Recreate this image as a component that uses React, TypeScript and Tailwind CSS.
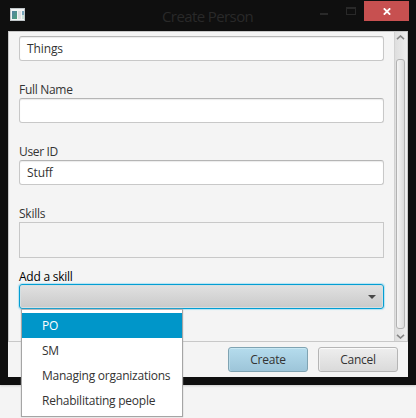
import React from "react";

const FONT = "font-['Open_Sans','Noto_Sans',sans-serif]";

function Label({ text, className = "" }: { text: string; className?: string }) {
  return <span className={`block h-[17px] shrink-0 whitespace-nowrap leading-[17px] ${className}`}>{text}</span>;
}

function Field({ value }: { value?: string }) {
  return (
    <div className="flex h-[25px] shrink-0 items-center rounded-[3px] border border-[#c8c8c8] border-t-[#b5b5b5] bg-white px-[7px] shadow-[inset_0_1px_1px_#ececec]">
      {value && <Label text={value} className="tracking-[-0.1px]" />}
    </div>
  );
}

function TitleBar() {
  return (
    <div className="flex h-[31px] shrink-0 text-[#292929]">
      <svg className="ml-[10px] mt-2 h-[13px] w-[15px] shrink-0" viewBox="0 0 15 13">
        <defs>
          <linearGradient id="pic" x1="0" y1="0" x2="1" y2="1">
            <stop offset="0" stopColor="#5682a5" />
            <stop offset="1" stopColor="#4ea078" />
          </linearGradient>
        </defs>
        <rect width="15" height="13" fill="#bfc5c8" />
        <rect x="1" y="1" width="13" height="11" fill="#f3f4f4" />
        <rect x="2" y="3" width="5" height="8" fill="url(#pic)" />
        <rect x="8" y="3" width="3" height="8" fill="#dfe0e2" />
        <rect x="12" y="3" width="2" height="4" fill="#78a5bb" />
        <rect x="12" y="7" width="2" height="4" fill="#cce1d7" />
      </svg>
      <span className="ml-[137px] mt-1 block h-6 w-[91px] shrink-0 whitespace-nowrap text-[15px] leading-6 tracking-[-0.6px]">
        Create Person
      </span>
      <svg className="ml-[67px] h-[20px] w-9 shrink-0" viewBox="0 0 36 20" shapeRendering="crispEdges">
        <rect x="0" y="13" width="8" height="2" fill="#292929" />
        <path d="M26 7h10v8H26zM27 9v5h8V9z" fill="#292929" fillRule="evenodd" />
      </svg>
      <div className="ml-2 mt-px flex h-5 w-[45px] shrink-0 items-center justify-center bg-[#c75050]">
        <svg className="mt-[1px] h-[7px] w-2" viewBox="0 0 8 7">
          <path d="M.8.3 7.2 6.7M7.2.3.8 6.7" stroke="#fff" strokeWidth="1.8" />
        </svg>
      </div>
    </div>
  );
}

function ScrollBar() {
  return (
    <div className="flex w-[13px] shrink-0 flex-col items-center border-l border-[#d2d2d2] bg-linear-to-r from-[#dedede] to-[#eeeeee]">
      <svg className="mr-[1px] mt-[3px] h-[5px] w-[9px] shrink-0" viewBox="0 0 9 5">
        <path d="M1 4.2 4.5 1 8 4.2" fill="none" stroke="#858585" strokeWidth="1.6" />
      </svg>
      <div className="mr-[1px] mt-[19px] h-[270px] w-[9px] shrink-0 rounded-[3px] border border-[#b2b2b2] bg-linear-to-r from-[#f5f5f5] to-[#dadada]" />
      <svg className="mr-[1px] mt-[5px] h-[5px] w-[9px] shrink-0" viewBox="0 0 9 5">
        <path d="M1 .8 4.5 4 8 .8" fill="none" stroke="#858585" strokeWidth="1.6" />
      </svg>
    </div>
  );
}

const skills = ["PO", "SM", "Managing organizations", "Rehabilitating people"];

function SkillMenu() {
  return (
    <div className="absolute left-[21px] top-[309px] h-[108px] w-[162px] border border-[#a5a5a5] border-t-[#b8b8b8] bg-white pt-[3px] shadow-[0_0_1px_#aaa]">
      {skills.map((skill, i) => (
        <div key={skill} className={`flex h-[25px] items-center pl-[20px] ${i === 0 ? "bg-[#0096c9] text-white" : ""}`}>
          <Label text={skill} />
        </div>
      ))}
    </div>
  );
}

export default function App() {
  return (
    <div className={`relative h-[418px] w-[416px] overflow-hidden bg-[#f4f4f4] text-[12px] tracking-[-0.24px] text-[#333] ${FONT}`}>
      <div className="flex h-[385px] flex-col bg-[#0f0f0f] shadow-[0_1px_2px_#ccc]">
        <TitleBar />
        <div className="ml-2 flex h-[346px] w-[400px] flex-col bg-[#f4f4f4]">
          <div className="flex h-[311px] border border-[#c8c8c8]">
            <div className="flex w-[375px] flex-col pl-[10px] pt-1">
              <Field value="Things" />
              <Label text="Full Name" className="mt-5 tracking-[-0.3px]" />
              <Field />
              <Label text="User ID" className="mt-5 tracking-[-0.35px]" />
              <Field value="Stuff" />
              <Label text="Skills" className="mt-5" />
              <div className="h-9 shrink-0 border border-[#c8c8c8]" />
              <Label text="Add a skill" className="mt-[9px] pt-px text-black" />
              <div className="flex h-[25px] shrink-0 items-center justify-end rounded-[3px] border border-[#039ed3] bg-linear-to-b from-[#e1e1e1] to-[#cacaca] pr-[7px] shadow-[0_0_1px_1px_#b6e3f2,inset_0_0_0_1px_#d5dfe2]">
                <svg className="h-1 w-2" viewBox="0 0 8 4"><path d="M0 0h8L4 4z" fill="#484848" /></svg>
              </div>
            </div>
            <div className="ml-[10px] flex"><ScrollBar /></div>
          </div>
          <div className="flex h-[35px] items-start justify-end gap-[10px] pr-[10px] pt-[5px]">
            <button className="flex h-[25px] w-20 items-center justify-center rounded-[3px] border border-[#7fa3b2] bg-linear-to-b from-[#b5dced] to-[#9dc5d9] shadow-[inset_0_1px_0_#c8e8f4,inset_1px_0_0_#b9dbe9]">
              <Label text="Create" />
            </button>
            <button className="flex h-[25px] w-20 items-center justify-center rounded-[3px] border border-[#b5b5b5] bg-linear-to-b from-[#eeeeee] to-[#dadada] shadow-[inset_0_1px_0_#fafafa,inset_1px_0_0_#f0f0f0]">
              <Label text="Cancel" />
            </button>
          </div>
        </div>
      </div>
      <SkillMenu />
    </div>
  );
}
